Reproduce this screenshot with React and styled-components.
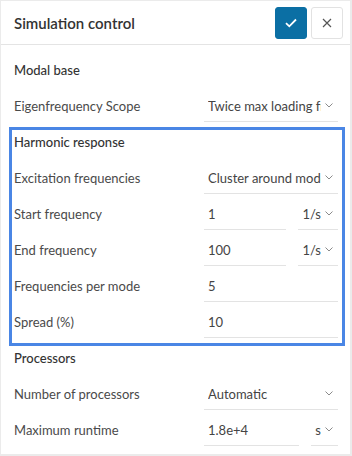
import React from 'react';
import styled, { createGlobalStyle } from 'styled-components';

const GlobalStyle = createGlobalStyle`
  html, body {
    margin: 0;
    padding: 0;
    background: #fff;
  }
  body {
    font-family: Lato, "Open Sans", "Liberation Sans", sans-serif;
  }
`;

const Chevron = () => (
  <svg width="8" height="5" viewBox="0 0 8 5" fill="none">
    <path d="M0.5 0.5 L4 4 L7.5 0.5" stroke="#8a8a8a" strokeWidth="1" />
  </svg>
);

const harmonic = [
  { label: 'Excitation frequencies', select: 'Cluster around modes' },
  { label: 'Start frequency', value: '1', unit: '1/s' },
  { label: 'End frequency', value: '100', unit: '1/s' },
  { label: 'Frequencies per mode', value: '5' },
  { label: 'Spread (%)', value: '10' },
];

const Field = ({ row }) => {
  if (row.select) {
    return (
      <Select>
        <SelectText>{row.select}</SelectText>
        <Chevron />
      </Select>
    );
  }
  return (
    <FieldRow>
      <Input>{row.value}</Input>
      {row.unit && (
        <Unit>
          <span>{row.unit}</span>
          <Chevron />
        </Unit>
      )}
    </FieldRow>
  );
};

const Row = ({ row }) => (
  <RowWrap>
    <Label>{row.label}</Label>
    <Field row={row} />
  </RowWrap>
);

const App = () => {
  return (
    <>
      <GlobalStyle />
      <Panel>
        <Header>
          <Title>Simulation control</Title>
          <Actions>
            <IconButton $primary>
              <svg width="12" height="10" viewBox="0 0 12 10" fill="none">
                <path d="M1 5.2 L4.3 8.3 L11 1.5" stroke="#fff" strokeWidth="1.8" />
              </svg>
            </IconButton>
            <IconButton>
              <svg width="10" height="10" viewBox="0 0 10 10" fill="none">
                <path d="M1 1 L9 9 M9 1 L1 9" stroke="#555" strokeWidth="1.2" />
              </svg>
            </IconButton>
          </Actions>
        </Header>
        <Body>
          <SectionTitle>Modal base</SectionTitle>
          <Row row={{ label: 'Eigenfrequency Scope', select: 'Twice max loading frequency' }} />
          <Highlight>
            <SectionTitle>Harmonic response</SectionTitle>
            {harmonic.map((r) => (
              <Row key={r.label} row={r} />
            ))}
          </Highlight>
          <SectionTitle>Processors</SectionTitle>
          <Row row={{ label: 'Number of processors', select: 'Automatic' }} />
          <Row row={{ label: 'Maximum runtime', value: '1.8e+4', unit: 's' }} />
        </Body>
      </Panel>
    </>
  );
};

export default App;

const Panel = styled.div`
  width: 352px;
  height: 456px;
  box-sizing: border-box;
  border: 2px solid #ebebeb;
  border-top-width: 1px;
  border-left-width: 1px;
  background: #fff;
  display: flex;
  flex-direction: column;
`;

const Header = styled.div`
  height: 44px;
  box-sizing: border-box;
  padding: 0 7px 0 13px;
  border-bottom: 1px solid #e4e4e4;
  display: flex;
  align-items: center;
  justify-content: space-between;
  flex-shrink: 0;
`;

const Title = styled.div`
  font-size: 15px;
  font-weight: 600;
  color: #333;
`;

const Actions = styled.div`
  display: flex;
  gap: 4px;
`;

const IconButton = styled.div`
  width: 32px;
  height: 32px;
  box-sizing: border-box;
  border-radius: 3px;
  display: flex;
  align-items: center;
  justify-content: center;
  background: ${(p) => (p.$primary ? '#0b6fa4' : '#fff')};
  border: 1px solid ${(p) => (p.$primary ? '#0b6fa4' : '#e2e2e2')};
`;

const Body = styled.div`
  padding: 7px 0 0;
  display: flex;
  flex-direction: column;
`;

const SectionTitle = styled.div`
  height: 36px;
  padding: 0 13px;
  display: flex;
  align-items: center;
  font-size: 13px;
  font-weight: 500;
  color: #333;
`;

const Highlight = styled.div`
  position: relative;
  &::after {
    content: '';
    position: absolute;
    top: 3px;
    left: 8px;
    right: 5px;
    bottom: -6px;
    border: 3px solid #4a86e5;
    pointer-events: none;
  }
`;

const RowWrap = styled.div`
  height: 36px;
  padding: 0 12px 0 13px;
  display: grid;
  grid-template-columns: 1fr 134px;
  align-items: center;
`;

const Label = styled.div`
  font-size: 13px;
  color: #4a4a4a;
  white-space: nowrap;
`;

const Underlined = styled.div`
  height: 32px;
  box-sizing: border-box;
  border-bottom: 1px solid #e3e3e3;
  display: flex;
  align-items: center;
  font-size: 13px;
  color: #444;
`;

const Select = styled(Underlined)`
  padding: 0 5px 0 4px;
  gap: 4px;
`;

const SelectText = styled.span`
  flex: 1;
  min-width: 0;
  overflow: hidden;
  white-space: nowrap;
`;

const FieldRow = styled.div`
  display: flex;
  gap: 12px;
`;

const Input = styled(Underlined)`
  flex: 1;
  padding: 0 4px;
`;

const Unit = styled(Underlined)`
  padding: 0 5px 0 4px;
  gap: 4px;
`;
